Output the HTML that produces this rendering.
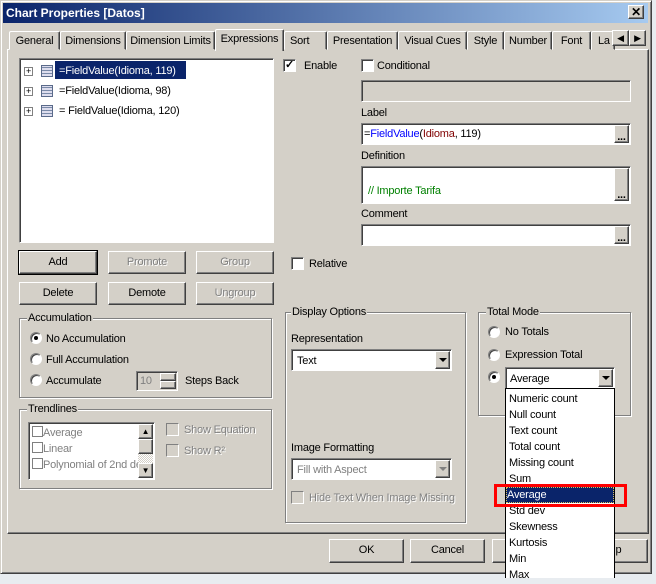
<!DOCTYPE html>
<html><head><meta charset="utf-8"><style>
*{box-sizing:border-box}
body{margin:0;width:656px;height:577px;overflow:hidden;background:#e8ecf0;font-family:"Liberation Sans",sans-serif;font-size:11px;letter-spacing:-0.2px;color:#000;position:relative;white-space:nowrap}
.a{position:absolute}
.win{left:0;top:0;width:652px;height:574px;background:#d4d0c8;border:1px solid;border-color:#d4d0c8 #404040 #404040 #d4d0c8;box-shadow:inset 1px 1px #fff,inset -1px -1px #808080}
.title{left:3px;top:3px;width:645px;height:20px;background:linear-gradient(90deg,#0a246a,#a6caf0);color:#fff;font-weight:bold;font-size:12px;padding:3px 3px;letter-spacing:0}
.raised{background:#d4d0c8;border:1px solid;border-color:#fff #404040 #404040 #fff;box-shadow:inset -1px -1px #808080}
.sunk{background:#fff;border:1px solid;border-color:#808080 #fff #fff #808080;box-shadow:inset 1px 1px #404040}
.btn{text-align:center;line-height:20px}
.dis{color:#808080;text-shadow:1px 1px #fff}
.tab{top:31px;height:19px;border:1px solid;border-color:#fff #404040 transparent #fff;box-shadow:inset -1px 0 #808080;border-radius:2px 2px 0 0;text-align:center;line-height:18px;background:#d4d0c8;overflow:hidden}
.grp{border:1px solid #808080;box-shadow:1px 1px #fff,inset 1px 1px #fff}
.gl{background:#d4d0c8;padding:0 1px}
.cb{width:13px;height:13px}
.rd{width:12px;height:12px;border-radius:50%;background:#fff;border:1px solid;border-color:#808080 #fff #fff #808080;box-shadow:inset 1px 1px #404040}
.dot:after{content:"";position:absolute;left:3px;top:3px;width:4px;height:4px;border-radius:50%;background:#000}
.arr{width:0;height:0;border-left:4px solid transparent;border-right:4px solid transparent;border-top:4px solid #000}
.li{left:2px;height:16px;line-height:17px;padding-left:1px}
</style></head><body>
<div class="a win"></div>
<div class="a title">Chart Properties [Datos]</div>
<div class="a raised" style="left:628px;top:5px;width:16px;height:14px;text-align:center;line-height:12px;font-weight:bold;font-size:12px">✕</div>

<div class="a" style="left:7px;top:49px;width:642px;height:485px;border:1px solid;border-color:#fff #404040 #404040 #fff;box-shadow:inset -1px -1px #808080"></div>
<div class="a tab" style="left:9px;width:51px">General</div>
<div class="a tab" style="left:60px;width:66px">Dimensions</div>
<div class="a tab" style="left:126px;width:89px">Dimension Limits</div>
<div class="a tab" style="left:215px;top:29px;width:69px;height:22px;border-bottom:none;line-height:19px">Expressions</div>
<div class="a tab" style="left:284px;width:43px;text-align:left;padding-left:5px">Sort</div>
<div class="a tab" style="left:327px;width:71px">Presentation</div>
<div class="a tab" style="left:398px;width:69px">Visual Cues</div>
<div class="a tab" style="left:467px;width:37px">Style</div>
<div class="a tab" style="left:504px;width:48px">Number</div>
<div class="a tab" style="left:552px;width:39px">Font</div>
<div class="a tab" style="left:591px;width:24px;text-align:left;padding-left:6px">La</div>
<div class="a raised" style="left:612px;top:30px;width:17px;height:16px;text-align:center;line-height:14px;font-size:9px">◀</div>
<div class="a raised" style="left:629px;top:30px;width:17px;height:16px;text-align:center;line-height:14px;font-size:9px">▶</div>

<div class="a sunk" style="left:19px;top:58px;width:255px;height:185px"></div>
<div class="a" style="left:55px;top:61px;width:131px;height:18px;background:#0a246a"></div>
<div class="a" style="left:24px;top:63px;line-height:16px">
<div style="height:20px"><span style="display:inline-block;width:9px;height:9px;border:1px solid #808080;background:#fff;font-size:9px;line-height:7px;text-align:center;vertical-align:middle">+</span><span style="display:inline-block;width:12px;height:12px;border:1px solid #5a6a8a;background:repeating-linear-gradient(0deg,#dde 0 2px,#7a8aa8 2px 3px);margin:0 6px 0 8px;vertical-align:middle"></span><span style="color:#fff">=FieldValue(Idioma, 119)</span></div>
<div style="height:20px"><span style="display:inline-block;width:9px;height:9px;border:1px solid #808080;background:#fff;font-size:9px;line-height:7px;text-align:center;vertical-align:middle">+</span><span style="display:inline-block;width:12px;height:12px;border:1px solid #5a6a8a;background:repeating-linear-gradient(0deg,#dde 0 2px,#7a8aa8 2px 3px);margin:0 6px 0 8px;vertical-align:middle"></span>=FieldValue(Idioma, 98)</div>
<div style="height:20px"><span style="display:inline-block;width:9px;height:9px;border:1px solid #808080;background:#fff;font-size:9px;line-height:7px;text-align:center;vertical-align:middle">+</span><span style="display:inline-block;width:12px;height:12px;border:1px solid #5a6a8a;background:repeating-linear-gradient(0deg,#dde 0 2px,#7a8aa8 2px 3px);margin:0 6px 0 8px;vertical-align:middle"></span>= FieldValue(Idioma, 120)</div>
</div>

<div class="a sunk cb" style="left:283px;top:59px;font-size:11px;line-height:10px;text-align:center;font-weight:bold">✓</div>
<div class="a" style="left:304px;top:60px">Enable</div>
<div class="a sunk cb" style="left:361px;top:59px"></div>
<div class="a" style="left:377px;top:60px">Conditional</div>
<div class="a" style="left:361px;top:80px;width:270px;height:22px;border:1px solid;border-color:#808080 #fff #fff #808080;box-shadow:inset 1px 1px #404040"></div>
<div class="a" style="left:361px;top:107px">Label</div>
<div class="a sunk" style="left:361px;top:123px;width:270px;height:22px;padding:4px 2px"><span>=</span><span style="color:#00f">FieldValue</span>(<span style="color:#800000">Idioma</span>, 119)</div>
<div class="a raised" style="left:614px;top:125px;width:15px;height:18px;font-weight:bold;text-align:center;line-height:22px">...</div>
<div class="a" style="left:361px;top:150px">Definition</div>
<div class="a sunk" style="left:361px;top:166px;width:270px;height:37px;padding:18px 6px;color:#008000">// Importe Tarifa</div>
<div class="a raised" style="left:614px;top:168px;width:15px;height:33px;font-weight:bold;text-align:center;line-height:52px">...</div>
<div class="a" style="left:361px;top:208px">Comment</div>
<div class="a sunk" style="left:361px;top:224px;width:270px;height:22px"></div>
<div class="a raised" style="left:614px;top:226px;width:15px;height:18px;font-weight:bold;text-align:center;line-height:22px">...</div>
<div class="a sunk cb" style="left:291px;top:257px"></div>
<div class="a" style="left:309px;top:258px">Relative</div>

<div class="a raised btn" style="left:19px;top:251px;width:78px;height:23px;outline:1px solid #000">Add</div>
<div class="a raised btn dis" style="left:108px;top:251px;width:78px;height:23px">Promote</div>
<div class="a raised btn dis" style="left:196px;top:251px;width:78px;height:23px">Group</div>
<div class="a raised btn" style="left:19px;top:282px;width:78px;height:23px">Delete</div>
<div class="a raised btn" style="left:108px;top:282px;width:78px;height:23px">Demote</div>
<div class="a raised btn dis" style="left:196px;top:282px;width:78px;height:23px">Ungroup</div>

<div class="a grp" style="left:19px;top:318px;width:253px;height:80px"></div>
<div class="a gl" style="left:27px;top:312px">Accumulation</div>
<div class="a rd dot" style="left:30px;top:332px"></div><div class="a" style="left:46px;top:333px">No Accumulation</div>
<div class="a rd" style="left:30px;top:353px"></div><div class="a" style="left:46px;top:354px">Full Accumulation</div>
<div class="a rd" style="left:30px;top:374px"></div><div class="a" style="left:46px;top:375px">Accumulate</div>
<div class="a" style="left:136px;top:371px;width:42px;height:20px;border:1px solid;border-color:#808080 #fff #fff #808080;box-shadow:inset 1px 1px #404040;padding:3px 3px;color:#808080">10</div>
<div class="a raised" style="left:160px;top:373px;width:16px;height:8px"></div>
<div class="a raised" style="left:160px;top:381px;width:16px;height:8px"></div>
<div class="a" style="left:185px;top:375px">Steps Back</div>

<div class="a grp" style="left:19px;top:409px;width:253px;height:80px"></div>
<div class="a gl" style="left:27px;top:403px">Trendlines</div>
<div class="a sunk" style="left:28px;top:422px;width:127px;height:58px;overflow:hidden;color:#808080;padding:2px 3px;line-height:16px">
<div><span style="display:inline-block;width:11px;height:11px;border:1px solid #808080;vertical-align:-1px"></span>Average</div>
<div><span style="display:inline-block;width:11px;height:11px;border:1px solid #808080;vertical-align:-1px"></span>Linear</div>
<div><span style="display:inline-block;width:11px;height:11px;border:1px solid #808080;vertical-align:-1px"></span>Polynomial of 2nd de</div>
</div>
<div class="a" style="left:138px;top:424px;width:15px;height:54px;background:repeating-conic-gradient(#fff 0 25%,#d4d0c8 0 50%) 0 0/2px 2px"></div>
<div class="a raised" style="left:138px;top:424px;width:15px;height:15px;text-align:center;font-size:8px;line-height:13px">▲</div>
<div class="a raised" style="left:138px;top:439px;width:15px;height:15px"></div>
<div class="a raised" style="left:138px;top:463px;width:15px;height:15px;text-align:center;font-size:8px;line-height:13px">▼</div>
<div class="a cb" style="left:166px;top:423px;border:1px solid;border-color:#808080 #fff #fff #808080"></div>
<div class="a dis" style="left:184px;top:424px">Show Equation</div>
<div class="a cb" style="left:166px;top:444px;border:1px solid;border-color:#808080 #fff #fff #808080"></div>
<div class="a dis" style="left:184px;top:445px">Show R²</div>

<div class="a grp" style="left:285px;top:312px;width:181px;height:211px"></div>
<div class="a gl" style="left:291px;top:306px">Display Options</div>
<div class="a" style="left:291px;top:333px">Representation</div>
<div class="a sunk" style="left:291px;top:349px;width:161px;height:22px;padding:5px 5px">Text</div>
<div class="a raised" style="left:435px;top:351px;width:15px;height:18px"><div class="a arr" style="left:3px;top:6px"></div></div>
<div class="a" style="left:291px;top:442px">Image Formatting</div>
<div class="a sunk" style="left:291px;top:458px;width:161px;height:22px;padding:5px 5px;color:#808080">Fill with Aspect</div>
<div class="a raised" style="left:435px;top:460px;width:15px;height:18px"><div class="a arr" style="left:3px;top:6px;border-top-color:#808080"></div></div>
<div class="a cb" style="left:291px;top:491px;border:1px solid;border-color:#808080 #fff #fff #808080"></div>
<div class="a dis" style="left:309px;top:492px">Hide Text When Image Missing</div>

<div class="a grp" style="left:478px;top:312px;width:153px;height:104px"></div>
<div class="a gl" style="left:486px;top:306px">Total Mode</div>
<div class="a rd" style="left:488px;top:326px"></div><div class="a" style="left:505px;top:326px">No Totals</div>
<div class="a rd" style="left:488px;top:349px"></div><div class="a" style="left:505px;top:349px">Expression Total</div>
<div class="a rd dot" style="left:488px;top:371px"></div>
<div class="a sunk" style="left:505px;top:367px;width:110px;height:22px;padding:5px 4px">Average</div>
<div class="a raised" style="left:598px;top:369px;width:15px;height:18px"><div class="a arr" style="left:3px;top:6px"></div></div>

<div class="a raised btn" style="left:329px;top:539px;width:75px;height:24px">OK</div>
<div class="a raised btn" style="left:410px;top:539px;width:75px;height:24px">Cancel</div>
<div class="a raised btn" style="left:492px;top:539px;width:75px;height:24px"></div>
<div class="a raised btn" style="left:573px;top:539px;width:75px;height:24px">Help</div>

<div class="a" style="left:505px;top:388px;width:110px;height:190px;background:#fff;border:1px solid #000;border-bottom:none">
<div class="a li" style="top:2px">Numeric count</div>
<div class="a li" style="top:18px">Null count</div>
<div class="a li" style="top:34px">Text count</div>
<div class="a li" style="top:50px">Total count</div>
<div class="a li" style="top:66px">Missing count</div>
<div class="a li" style="top:82px">Sum</div>
<div class="a li" style="top:98px;left:0;width:108px;background:#0a246a;color:#fff;outline:1px dotted #d8c060;outline-offset:-1px">Average</div>
<div class="a li" style="top:114px">Std dev</div>
<div class="a li" style="top:130px">Skewness</div>
<div class="a li" style="top:146px">Kurtosis</div>
<div class="a li" style="top:162px">Min</div>
<div class="a li" style="top:178px">Max</div>
</div>
<div class="a" style="left:494px;top:484px;width:133px;height:23px;border:3px solid #f00"></div>
</body></html>
